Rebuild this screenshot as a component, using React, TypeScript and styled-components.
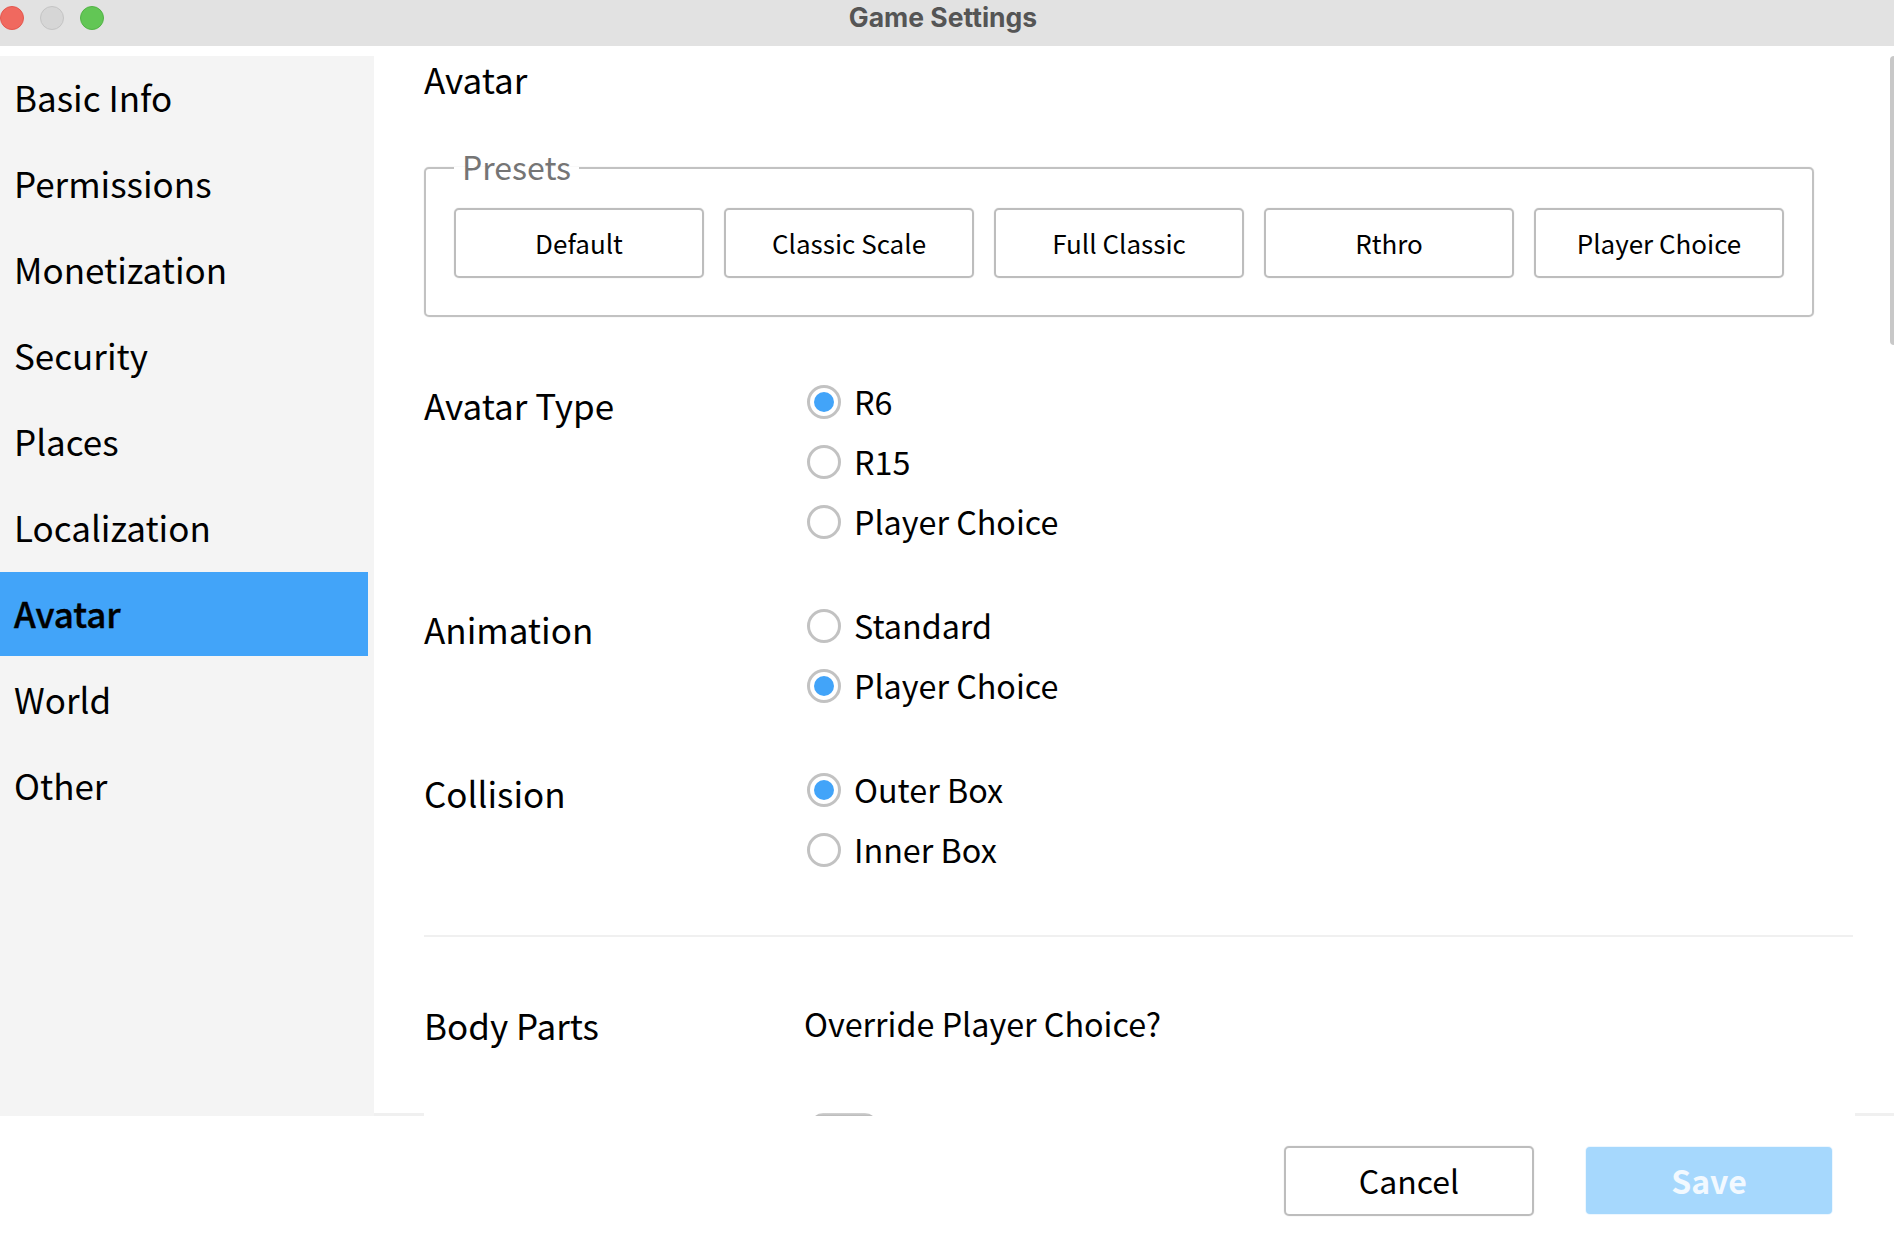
import styled, { createGlobalStyle } from 'styled-components';

const tabs = [
  'Basic Info',
  'Permissions',
  'Monetization',
  'Security',
  'Places',
  'Localization',
  'Avatar',
  'World',
  'Other',
];

const presets = ['Default', 'Classic Scale', 'Full Classic', 'Rthro', 'Player Choice'];

const groups = [
  { title: 'Avatar Type', options: ['R6', 'R15', 'Player Choice'], selected: 0 },
  { title: 'Animation', options: ['Standard', 'Player Choice'], selected: 1 },
  { title: 'Collision', options: ['Outer Box', 'Inner Box'], selected: 0 },
];

const App = () => (
  <Window>
    <GlobalStyle />
    <TitleBar>
      <Lights>
        <Light $color="#f0695f" $edge="#e4574e" />
        <Light $color="#d6d6d6" $edge="#c4c4c4" />
        <Light $color="#62c655" $edge="#52b346" />
      </Lights>
      <WindowTitle>Game Settings</WindowTitle>
    </TitleBar>

    <Body>
      <Sidebar>
        {tabs.map((tab) => (
          <Tab key={tab} $active={tab === 'Avatar'}>
            {tab}
          </Tab>
        ))}
      </Sidebar>

      <Pane>
        <Heading>Avatar</Heading>

        <PresetBox>
          <legend>Presets</legend>
          {presets.map((preset) => (
            <PresetButton key={preset}>{preset}</PresetButton>
          ))}
        </PresetBox>

        <Groups>
          {groups.map((group) => (
            <Row key={group.title}>
              <RowLabel>{group.title}</RowLabel>
              <Options>
                {group.options.map((option, index) => (
                  <Option key={option}>
                    <Radio $checked={index === group.selected} />
                    {option}
                  </Option>
                ))}
              </Options>
            </Row>
          ))}
        </Groups>

        <Divider />

        <BodyParts>
          <RowLabel>Body Parts</RowLabel>
          <div>
            <Override>Override Player Choice?</Override>
            <ToggleKnob />
          </div>
        </BodyParts>
      </Pane>

      <Scrollbar />
    </Body>

    <Footer>
      <CancelButton>Cancel</CancelButton>
      <SaveButton>Save</SaveButton>
    </Footer>
  </Window>
);

export default App;

const GlobalStyle = createGlobalStyle`
  html, body {
    margin: 0;
    padding: 0;
    background: #fff;
  }

  * {
    box-sizing: border-box;
  }
`;

const Window = styled.div`
  width: 1894px;
  height: 1238px;
  display: flex;
  flex-direction: column;
  overflow: hidden;
  background: #fff;
  color: #000;
  font-family: 'Noto Sans CJK SC', 'Noto Sans', sans-serif;
`;

const TitleBar = styled.div`
  position: relative;
  height: 46px;
  flex: none;
  display: flex;
  align-items: center;
  justify-content: center;
  background: #e2e2e2;
`;

const Lights = styled.div`
  position: absolute;
  left: 0;
  top: 6px;
  display: flex;
  gap: 16px;
`;

const Light = styled.span<{ $color: string; $edge: string }>`
  width: 24px;
  height: 24px;
  border-radius: 50%;
  background: ${({ $color }) => $color};
  border: 1px solid ${({ $edge }) => $edge};
`;

const WindowTitle = styled.div`
  margin: -12px 0 0 -8px;
  font-family: Inter, 'Liberation Sans', sans-serif;
  font-size: 26.5px;
  font-weight: 700;
  line-height: 30px;
  color: #555;
`;

const Body = styled.div`
  flex: 1;
  min-height: 0;
  display: flex;
  position: relative;
`;

const Sidebar = styled.div`
  width: 374px;
  flex: none;
  margin-top: 10px;
  display: flex;
  flex-direction: column;
  gap: 2px;
  padding-right: 6px;
  background: #f4f4f4;
`;

const Tab = styled.div<{ $active?: boolean }>`
  height: 84px;
  display: flex;
  align-items: center;
  padding: 0 0 4px 14px;
  font-size: 35px;
  font-weight: ${({ $active }) => ($active ? 500 : 400)};
  -webkit-text-stroke: ${({ $active }) => ($active ? '0.4px #000' : '0')};
  background: ${({ $active }) => ($active ? '#42a4f9' : 'transparent')};
`;

const Pane = styled.div`
  flex: 1;
  min-width: 0;
  margin-top: 8px;
  padding: 0 41px 0 50px;
  overflow: hidden;
`;

const Heading = styled.div`
  height: 52px;
  line-height: 50px;
  font-size: 35px;
`;

const PresetBox = styled.fieldset`
  width: 1390px;
  height: 169px;
  margin: 42px 0 0;
  padding: 0 0 0 28px;
  display: flex;
  gap: 20px;
  border: 2px solid #c2c2c2;
  border-radius: 5px;
  box-shadow: 0 0 1px #c2c2c2;

  legend {
    margin-left: 0;
    padding: 0 8px 4px;
    line-height: 36px;
    font-size: 32px;
    color: #757575;
  }
`;

const PresetButton = styled.div`
  width: 250px;
  height: 70px;
  margin-top: 20px;
  display: flex;
  align-items: center;
  justify-content: center;
  padding-bottom: 2px;
  font-size: 26px;
  border: 2px solid #bdbdbd;
  border-radius: 5px;
  box-shadow: 0 0 1px #bdbdbd;
`;

const Groups = styled.div`
  margin-top: 55px;
  display: flex;
  flex-direction: column;
  gap: 44px;
`;

const Row = styled.div`
  display: flex;
`;

const RowLabel = styled.div`
  width: 381px;
  flex: none;
  padding-top: 8px;
  line-height: 50px;
  font-size: 35px;
`;

const Options = styled.div`
  display: flex;
  flex-direction: column;
`;

const OptionText = `
  font-size: 32.3px;
`;

const Option = styled.div`
  height: 60px;
  display: flex;
  align-items: center;
  gap: 13px;
  margin-left: 2px;
  padding-bottom: 2px;
  ${OptionText}
`;

const Radio = styled.span<{ $checked?: boolean }>`
  width: 34px;
  height: 34px;
  margin-top: 2px;
  display: flex;
  align-items: center;
  justify-content: center;
  border: 3px solid #c2c2c2;
  border-radius: 50%;

  &::after {
    content: '';
    width: 20px;
    height: 20px;
    border-radius: 50%;
    background: ${({ $checked }) => ($checked ? '#42a4f9' : 'transparent')};
  }
`;

const Divider = styled.div`
  height: 2px;
  margin-top: 55px;
  background: #f0f0f0;
`;

const BodyParts = styled.div`
  margin-top: 55px;
  display: flex;
`;

const Override = styled.div`
  margin-left: -1px;
  padding-top: 6px;
  line-height: 50px;
  ${OptionText}
`;

const ToggleKnob = styled.div`
  width: 66px;
  height: 44px;
  margin: 65px 0 0 6px;
  border-radius: 12px;
  background: linear-gradient(#d4d4d4, #b0b0b0 4px);
`;

const Scrollbar = styled.div`
  position: absolute;
  top: 10px;
  right: 0;
  width: 4px;
  height: 289px;
  border-radius: 4px 0 0 4px;
  background: #c8c8c8;
`;

const Footer = styled.div`
  position: relative;
  height: 122px;
  flex: none;
  display: flex;
  gap: 52px;
  padding: 30px 62px 0 1284px;
  background: #fff;

  &::before,
  &::after {
    content: '';
    position: absolute;
    top: -3px;
    height: 3px;
    background: #f0f0f0;
  }

  &::before {
    left: 374px;
    width: 50px;
  }

  &::after {
    left: 1855px;
    right: 0;
  }
`;

const CancelButton = styled.div`
  width: 250px;
  height: 70px;
  display: flex;
  align-items: center;
  justify-content: center;
  padding-bottom: 2px;
  font-size: 32px;
  border: 2px solid #bdbdbd;
  border-radius: 5px;
  box-shadow: 0 0 1px #bdbdbd;
`;

const SaveButton = styled.div`
  width: 246px;
  height: 67px;
  margin-top: 1px;
  display: flex;
  align-items: center;
  justify-content: center;
  padding-bottom: 2px;
  font-size: 32px;
  font-weight: 700;
  color: #f2f9ff;
  background: #a6d8fd;
  border-radius: 4px;
  box-shadow: 0 0 0 1px #edf7ff;
`;
